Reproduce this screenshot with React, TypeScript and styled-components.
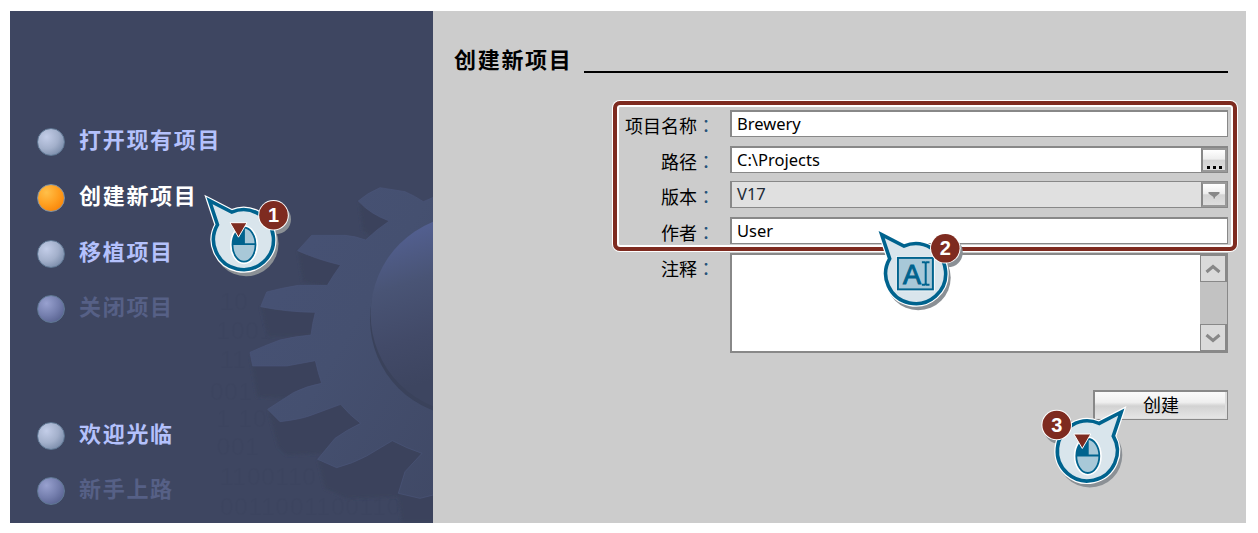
import React from 'react';
import styled, { createGlobalStyle } from 'styled-components';

const CJK = '"Noto Sans CJK SC", sans-serif';

const GlobalStyle = createGlobalStyle`
  * { box-sizing: border-box; }
  body { margin: 0; background: #fff; overflow: hidden; }
`;

const Page = styled.div`
  width: 1258px;
  height: 533px;
  padding: 11px 12px 10px 10px;
  position: relative;
  display: flex;
  background: #fff;
`;

const Sidebar = styled.nav`
  width: 423px;
  height: 512px;
  position: relative;
  flex: none;
  overflow: hidden;
  background: #3e4661;
`;

const GearArt = styled.svg`
  position: absolute;
  inset: 0;
`;

const NavList = styled.div`
  position: relative;
  padding: 103px 0 0 27px;
  display: flex;
  flex-direction: column;
`;

type Tone = 'normal' | 'active' | 'disabled';

const tones: Record<Tone, { text: string; orb: string }> = {
  normal: { text: '#b4c1fc', orb: 'radial-gradient(circle at 34% 32%, #c3cde8 0%, #a3b0cb 45%, #7688a6 80%, #5b7593 100%)' },
  active: { text: '#ffffff', orb: 'radial-gradient(circle at 34% 30%, #ffc04a 0%, #ff9f20 45%, #f77f04 85%, #d97a20 100%)' },
  disabled: { text: '#566086', orb: 'radial-gradient(circle at 34% 30%, #98a1cf 0%, #757fae 45%, #57618f 80%, #4b5c80 100%)' },
};

const NavItem = styled.div<{ $tone: Tone; $gap?: number }>`
  height: 56px;
  margin-top: ${p => p.$gap ?? 0}px;
  display: flex;
  align-items: center;
  gap: 14px;
  color: ${p => tones[p.$tone].text};
`;

const Orb = styled.span<{ $tone: Tone }>`
  width: 28px;
  height: 28px;
  flex: none;
  border-radius: 50%;
  border: ${p => (p.$tone === 'active' ? '1.5px solid #8093a5' : '1px solid #607894')};
  background: ${p => tones[p.$tone].orb};
  background-origin: border-box;
`;

const NavText = styled.span`
  font: 700 22px/28px ${CJK};
  letter-spacing: 1.7px;
  margin-top: -9px;
`;

const Content = styled.main`
  flex: 1;
  height: 512px;
  background: #ccc;
  padding: 31px 18px 0 21px;
`;

const Heading = styled.header`
  height: 31px;
  display: flex;
  align-items: flex-end;
  gap: 11px;
`;

const Title = styled.h1`
  margin: 0 0 1px;
  color: #000;
  font: 700 22px/28px ${CJK};
  letter-spacing: 1.7px;
`;

const Rule = styled.div`
  flex: 1;
  height: 2px;
  background: #000;
`;

const Form = styled.div`
  margin-top: 37px;
  display: grid;
  grid-template-columns: 261px 498px;
  column-gap: 15px;
  grid-template-rows: 27px 26px 27px 27px 100px;
  row-gap: 9px;
`;

const Label = styled.label`
  font: 400 18px/27px ${CJK};
  color: #000;
  padding-top: 2px;
  white-space: nowrap;
  text-align: right;
`;

const Colon = styled.span`
  font-family: "Noto Sans CJK TC", sans-serif;
  color: #255279;
`;

const Field = styled.div<{ $readOnly?: boolean }>`
  height: 27px;
  display: flex;
  justify-content: space-between;
  border: solid #888;
  border-width: ${p => (p.$readOnly ? '1px 1px 1px 2px' : '2px 1px 1px 2px')};
  background: ${p => (p.$readOnly ? '#e0e0e0' : '#fff')};
  color: ${p => (p.$readOnly ? '#222b36' : '#000')};
`;

const Value = styled.span`
  padding-left: 5px;
  font: 400 16.5px/23px "Noto Sans", sans-serif;
`;

const FieldButton = styled.div`
  width: 26px;
  border: 2px solid #999;
  border-left-color: #888;
  background: linear-gradient(#fff 0%, #eee 45%, #d3d3d3 52%, #dedede 100%);
  display: flex;
  justify-content: center;
  align-items: center;
`;

const Dots = styled.div`
  display: flex;
  gap: 3px;
  margin-top: 15px;
  i { width: 3px; height: 3px; background: #000; }
`;

const Comment = styled.div`
  height: 100px;
  display: flex;
  justify-content: flex-end;
  border: 2px solid #888;
  border-right-width: 1px;
  background: #fff;
`;

const ScrollTrack = styled.div`
  width: 27px;
  background: #c2c2c2;
  display: flex;
  flex-direction: column;
  justify-content: space-between;
`;

const ScrollButton = styled.div`
  height: 27px;
  border: 1px solid #888;
  border-right-width: 2px;
  background: #dadada;
  display: flex;
  align-items: center;
  justify-content: center;
`;

const Actions = styled.div`
  margin-top: 37px;
  display: flex;
  justify-content: flex-end;
`;

const CreateButton = styled.button`
  width: 135px;
  height: 30px;
  padding: 0 0 2px;
  border: solid #888;
  border-width: 2px 1px 1px 2px;
  border-radius: 0;
  background: linear-gradient(#fafafa 0%, #efefef 38%, #d2d2d2 52%, #dedede 80%, #e6e6e6 100%);
  box-shadow: inset -2px -1px 0 #ddd;
  color: #000;
  font: 400 18px/25px ${CJK};
`;

const Highlight = styled.div`
  position: absolute;
  left: 613px;
  top: 101px;
  width: 624px;
  height: 150px;
  border: 4px solid #7e2b20;
  border-radius: 7px;
  box-shadow: 0 0 0 1px #fff, inset 0 0 0 2px #fff;
`;

const CalloutLayer = styled.svg`
  position: absolute;
  inset: 0;
`;

const GEAR =
  'M640 142 L610 155 Q585 138 555 125 L480 113 Q440 130 415 153 Q450 192 508 213 Q470 238 437 270 Q405 258 375 256 H275 L233 302 Q290 328 362 345 Q340 375 322 406 H235 Q180 415 140 426 L122 470 Q200 486 286 487 Q277 520 273 555 Q220 560 180 570 Q130 588 90 607 L98 648 H200 L286 632 Q294 668 305 700 Q260 708 220 728 L143 778 L180 815 Q240 808 270 797 L362 763 Q388 795 422 820 Q380 840 345 865 L293 928 L350 953 Q400 940 440 918 L517 872 Q560 895 606 910 L555 965 L535 1030 L600 1045 L640 1035 Z';

const DIGITS: [number, number, string][] = [
  [0, 480, '10'], [-10, 568, '1001'], [0, 655, '11'], [-30, 750, '001'], [-10, 830, '1 10'],
  [-10, 915, '001'], [0, 1005, '1100110'], [0, 1095, '0011001100110'],
];

function Gear() {
  return (
    <GearArt width="423" height="512" viewBox="0 0 423 512" aria-hidden="true">
      <defs>
        <linearGradient id="gear" x1="0" y1="0" x2="1" y2="1">
          <stop offset="0" stopColor="#475276" />
          <stop offset="0.5" stopColor="#455070" />
          <stop offset="1" stopColor="#404966" />
        </linearGradient>
        <linearGradient id="hub" gradientUnits="userSpaceOnUse" x1="500" y1="250" x2="640" y2="690">
          <stop offset="0" stopColor="#536092" />
          <stop offset="0.35" stopColor="#495475" />
          <stop offset="0.7" stopColor="#424a68" />
          <stop offset="1" stopColor="#3d4560" />
        </linearGradient>
        <filter id="soft"><feGaussianBlur stdDeviation="5" /></filter>
      </defs>
      <g transform="translate(210 139) scale(0.33333)">
        <g fill="#39415b" fontFamily="Liberation Sans" fontSize="72" letterSpacing="3" opacity="0.2">
          {DIGITS.map(([x, y, t]) => <text key={y} x={x} y={y}>{t}</text>)}
        </g>
        <g fill="#3a425b" filter="url(#soft)">
          <path d="M418 155 L428 240 L470 270 L520 210 Z" />
          <path d="M235 302 L248 395 L330 410 L380 340 Z" />
          <path d="M122 470 L145 560 L280 558 L300 480 Z" />
          <path d="M92 620 L112 740 L220 745 L320 700 L300 625 Z" />
          <path d="M146 785 L175 890 L200 915 L310 910 L435 820 L360 755 Z" />
          <path d="M294 930 L315 1015 L380 1045 L540 1040 L615 910 L510 865 Z" />
          <path d="M535 1030 L545 1118 H650 V1020 Z" />
        </g>
        <path d={GEAR} fill="url(#gear)" stroke="#4a5578" strokeWidth="2" />
        <circle cx="742" cy="508" r="292" fill="#3a425b" />
        <circle cx="750" cy="492" r="298" fill="url(#hub)" />
      </g>
    </GearArt>
  );
}

interface CalloutProps {
  x: number;
  y: number;
  badge: [number, number];
  label: string;
  mirrored?: boolean;
  kind: 'click' | 'text';
}

const BUBBLE = 'M-34 -39 L-11.8 -27.6 A30 30 0 1 1 -26 -15 Z';

function Callout({ x, y, badge, label, mirrored, kind }: CalloutProps) {
  const flip = mirrored ? 'scale(-1 1)' : undefined;
  return (
    <g transform={`translate(${x} ${y})`}>
      <g transform="translate(2.5 4)" fill="#8b9095">
        <circle r="32.5" />
        <circle cx={badge[0]} cy={badge[1]} r="15" />
      </g>
      <path d={BUBBLE} transform={flip} fill="#fff" stroke="#fff" strokeWidth="6" />
      <path d={BUBBLE} transform={flip} fill="#d9e5ec" stroke="#00638e" strokeWidth="3.6" />
      {kind === 'click' ? (
        <g>
          <ellipse cx="0.5" cy="5" rx="14" ry="19.5" fill="#fff" />
          <ellipse cx="0.5" cy="5" rx="11.5" ry="17" fill="#a8c8d8" />
          <path d="M0.5 -12 A11.5 17 0 0 0 -11 5 L0.5 5 Z" fill="#00638e" />
          <ellipse cx="0.5" cy="5" rx="11.5" ry="17" fill="none" stroke="#00638e" strokeWidth="1.8" />
          <path d="M-11 4.5 H12 M0.5 -12 V4" stroke="#00638e" strokeWidth="1.8" />
          <path d="M-13.5 -17 H3.5 L-5 -2.5 Z" fill="#7e2b20" stroke="#fff" strokeWidth="1" />
        </g>
      ) : (
        <g>
          <rect x="-19.5" y="-17.5" width="38.5" height="35" fill="#fff" />
          <rect x="-17.8" y="-15.8" width="35" height="31.5" fill="#a8c8d8" stroke="#00638e" strokeWidth="2" />
          <text x="-3.8" y="10" textAnchor="middle" fill="#00638e" stroke="#00638e" strokeWidth="1" fontFamily="Liberation Sans" fontSize="27">A</text>
          <path d="M6.2 -11.5 H9 L10 -10.5 L11 -11.5 H13.8 M10 -10.5 V10 M6.2 11 H9 L10 10 L11 11 H13.8" fill="none" stroke="#00638e" strokeWidth="2" />
        </g>
      )}
      <circle cx={badge[0]} cy={badge[1]} r="15.3" fill="#fff" />
      <circle cx={badge[0]} cy={badge[1]} r="14.3" fill="#7e2b20" />
      <text x={badge[0]} y={badge[1] + 7} textAnchor="middle" fill="#fff" fontFamily="Liberation Sans" fontWeight="700" fontSize="20">{label}</text>
    </g>
  );
}

const NAV: { text: string; tone: Tone; gap?: number }[] = [
  { text: '打开现有项目', tone: 'normal' },
  { text: '创建新项目', tone: 'active' },
  { text: '移植项目', tone: 'normal' },
  { text: '关闭项目', tone: 'disabled', gap: -1 },
  { text: '欢迎光临', tone: 'normal', gap: 71 },
  { text: '新手上路', tone: 'disabled', gap: -1 },
];

function FieldLabel({ children }: { children: React.ReactNode }) {
  return <Label>{children}<Colon>：</Colon></Label>;
}

function Chevron({ down }: { down?: boolean }) {
  return (
    <svg width="16" height="10" viewBox="0 0 16 10">
      <path d={down ? 'M1.5 2 L8 7.5 L14.5 2' : 'M1.5 8 L8 2.5 L14.5 8'} fill="none" stroke="#888" strokeWidth="3" />
    </svg>
  );
}

export default function App() {
  return (
    <>
      <GlobalStyle />
      <Page>
        <Sidebar>
          <Gear />
          <NavList>
            {NAV.map(item => (
              <NavItem key={item.text} $tone={item.tone} $gap={item.gap}>
                <Orb $tone={item.tone} />
                <NavText>{item.text}</NavText>
              </NavItem>
            ))}
          </NavList>
        </Sidebar>
        <Content>
          <Heading>
            <Title>创建新项目</Title>
            <Rule />
          </Heading>
          <Form>
            <FieldLabel>项目名称</FieldLabel>
            <Field><Value>Brewery</Value></Field>
            <FieldLabel>路径</FieldLabel>
            <Field>
              <Value>C:\Projects</Value>
              <FieldButton><Dots><i /><i /><i /></Dots></FieldButton>
            </Field>
            <FieldLabel>版本</FieldLabel>
            <Field $readOnly>
              <Value>V17</Value>
              <FieldButton>
                <svg width="12" height="8" viewBox="0 0 12 8"><path d="M0.5 1 H11.5 V2.5 L7 6 V7.5 H5.5 V6 L0.5 2.5 Z" fill="#888" /></svg>
              </FieldButton>
            </Field>
            <FieldLabel>作者</FieldLabel>
            <Field><Value>User</Value></Field>
            <FieldLabel>注释</FieldLabel>
            <Comment>
              <ScrollTrack>
                <ScrollButton><Chevron /></ScrollButton>
                <ScrollButton><Chevron down /></ScrollButton>
              </ScrollTrack>
            </Comment>
          </Form>
          <Actions><CreateButton>创建</CreateButton></Actions>
        </Content>
        <Highlight />
        <CalloutLayer width="1258" height="533" viewBox="0 0 1258 533">
          <Callout x={243.5} y={239.7} badge={[30, -24.5]} label="1" kind="click" />
          <Callout x={915.7} y={273.7} badge={[29.6, -25.4]} label="2" kind="text" />
          <Callout x={1087.3} y={451} badge={[-30.6, -26]} label="3" kind="click" mirrored />
        </CalloutLayer>
      </Page>
    </>
  );
}
